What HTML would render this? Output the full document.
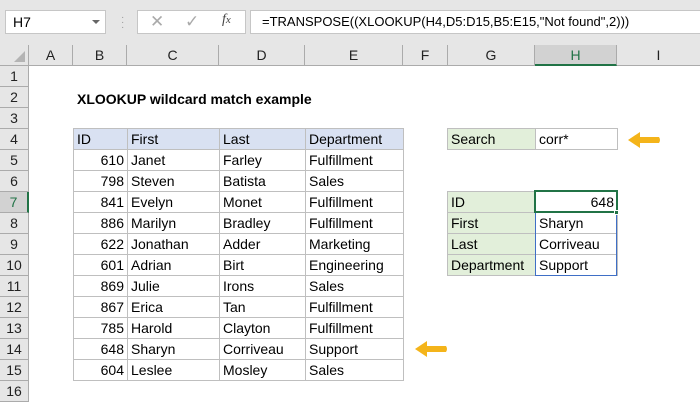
<!DOCTYPE html>
<html><head><style>
*{margin:0;padding:0;box-sizing:border-box}
body{width:700px;height:400px;overflow:hidden;background:#fff;font-family:"Liberation Sans",sans-serif;font-size:14px;color:#000;position:relative}
.a{position:absolute}
.top{left:0;top:0;width:700px;height:45px;background:#e6e6e6}
.box{background:#fff;border:1px solid #c6c6c6}
.ch{top:45px;height:21px;background:#e6e6e6;border-right:1px solid #ababab;border-bottom:1px solid #ababab;text-align:center;line-height:21px;color:#222;font-size:14px}
.rh{left:0;width:29px;height:21px;background:#e6e6e6;border-bottom:1px solid #ababab;border-right:1px solid #ababab;text-align:center;line-height:21px;color:#222}
table{border-collapse:collapse;position:absolute}
td{border:1px solid #bfbfbf;height:21px;padding:1px 3px 0;line-height:19px;white-space:nowrap;font-size:14px}
.n{text-align:right}
.hd td{background:#d9e1f2}
.g{background:#e2efda}
</style></head><body>
<div class="a top"></div>
<div class="a box" style="left:5px;top:10px;width:101px;height:24px;line-height:22px;padding-left:7px">H7</div>
<div class="a" style="left:92px;top:20px;width:0;height:0;border-left:4px solid transparent;border-right:4px solid transparent;border-top:4px solid #666"></div>
<div class="a" style="left:121px;top:15px;color:#999;font-size:10px;line-height:5px">·<br>·<br>·</div>
<div class="a box" style="left:137px;top:10px;width:109px;height:24px"></div>
<div class="a" style="left:150px;top:12px;color:#aaa;font-size:17px">✕</div>
<div class="a" style="left:185px;top:12px;color:#aaa;font-size:17px">✓</div>
<div class="a" style="left:222px;top:12px;color:#444;font-size:14px;font-style:italic;font-family:'Liberation Serif',serif">f<span style="font-size:11px">x</span></div>
<div class="a box" style="left:250px;top:10px;width:460px;height:24px;line-height:22px;padding-left:11px;font-size:13px">=TRANSPOSE((XLOOKUP(H4,D5:D15,B5:E15,"Not found",2)))</div>

<div class="a ch" style="left:0;width:29px"></div>
<div class="a" style="left:14px;top:51px;width:0;height:0;border-left:11px solid transparent;border-bottom:11px solid #b4b4b4"></div>
<div class="a ch" style="left:29px;width:44px">A</div>
<div class="a ch" style="left:73px;width:54px">B</div>
<div class="a ch" style="left:127px;width:92px">C</div>
<div class="a ch" style="left:219px;width:86px">D</div>
<div class="a ch" style="left:305px;width:98px">E</div>
<div class="a ch" style="left:403px;width:45px">F</div>
<div class="a ch" style="left:448px;width:87px">G</div>
<div class="a ch" style="left:535px;width:82px;background:#d2d2d2;border-bottom:2px solid #217346;color:#217346">H</div>
<div class="a ch" style="left:617px;width:83px;border-right:none">I</div>

<div class="a rh" style="top:66px">1</div>
<div class="a rh" style="top:87px">2</div>
<div class="a rh" style="top:108px">3</div>
<div class="a rh" style="top:129px">4</div>
<div class="a rh" style="top:150px">5</div>
<div class="a rh" style="top:171px">6</div>
<div class="a rh" style="top:192px;background:#d2d2d2;color:#217346;border-right:2px solid #217346">7</div>
<div class="a rh" style="top:213px">8</div>
<div class="a rh" style="top:234px">9</div>
<div class="a rh" style="top:255px">10</div>
<div class="a rh" style="top:276px">11</div>
<div class="a rh" style="top:297px">12</div>
<div class="a rh" style="top:318px">13</div>
<div class="a rh" style="top:339px">14</div>
<div class="a rh" style="top:360px">15</div>
<div class="a rh" style="top:381px">16</div>

<div class="a" style="left:77px;top:90px;font-weight:bold;line-height:19px">XLOOKUP wildcard match example</div>

<table style="left:73px;top:128px">
<tr class="hd"><td style="width:54px">ID</td><td style="width:92px">First</td><td style="width:86px">Last</td><td style="width:98px">Department</td></tr>
<tr><td class="n">610</td><td>Janet</td><td>Farley</td><td>Fulfillment</td></tr>
<tr><td class="n">798</td><td>Steven</td><td>Batista</td><td>Sales</td></tr>
<tr><td class="n">841</td><td>Evelyn</td><td>Monet</td><td>Fulfillment</td></tr>
<tr><td class="n">886</td><td>Marilyn</td><td>Bradley</td><td>Fulfillment</td></tr>
<tr><td class="n">622</td><td>Jonathan</td><td>Adder</td><td>Marketing</td></tr>
<tr><td class="n">601</td><td>Adrian</td><td>Birt</td><td>Engineering</td></tr>
<tr><td class="n">869</td><td>Julie</td><td>Irons</td><td>Sales</td></tr>
<tr><td class="n">867</td><td>Erica</td><td>Tan</td><td>Fulfillment</td></tr>
<tr><td class="n">785</td><td>Harold</td><td>Clayton</td><td>Fulfillment</td></tr>
<tr><td class="n">648</td><td>Sharyn</td><td>Corriveau</td><td>Support</td></tr>
<tr><td class="n">604</td><td>Leslee</td><td>Mosley</td><td>Sales</td></tr>
</table>

<table style="left:447px;top:128px">
<tr><td class="g" style="width:88px">Search</td><td style="width:82px">corr*</td></tr>
</table>

<table style="left:447px;top:191px">
<tr><td class="g" style="width:88px">ID</td><td class="n" style="width:82px">648</td></tr>
<tr><td class="g">First</td><td>Sharyn</td></tr>
<tr><td class="g">Last</td><td>Corriveau</td></tr>
<tr><td class="g">Department</td><td>Support</td></tr>
</table>
<div class="a" style="left:535px;top:212px;width:82px;height:64px;border:1px solid #3f6fc6;border-top:none"></div>
<div class="a" style="left:534px;top:190px;width:84px;height:23px;border:2px solid #217346"></div>
<div class="a" style="left:614px;top:210px;width:5px;height:5px;background:#217346;border:1px solid #fff"></div>

<svg class="a" style="left:626px;top:130px" width="36" height="20"><path d="M2 10 L14 2 L14 7 L33 7 Q35 10 33 13 L14 13 L14 18 Z" fill="#f4b41a"/></svg>
<svg class="a" style="left:413px;top:339px" width="36" height="20"><path d="M2 10 L14 2 L14 7 L33 7 Q35 10 33 13 L14 13 L14 18 Z" fill="#f4b41a"/></svg>
</body></html>
